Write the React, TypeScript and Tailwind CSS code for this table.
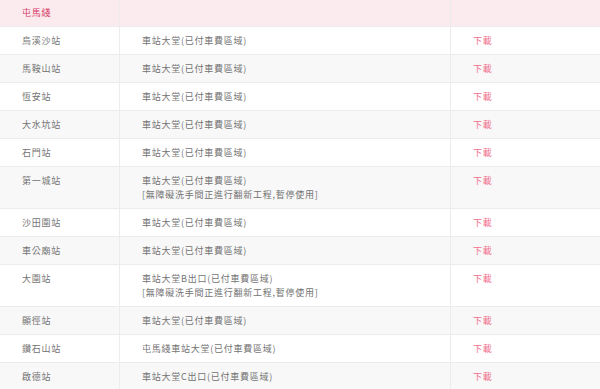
type Row = { name: string; place: string; note?: string };

const rows: Row[] = [
  { name: "烏溪沙站", place: "車站大堂(已付車費區域)" },
  { name: "馬鞍山站", place: "車站大堂(已付車費區域)" },
  { name: "恆安站", place: "車站大堂(已付車費區域)" },
  { name: "大水坑站", place: "車站大堂(已付車費區域)" },
  { name: "石門站", place: "車站大堂(已付車費區域)" },
  {
    name: "第一城站",
    place: "車站大堂(已付車費區域)",
    note: "[無障礙洗手間正進行翻新工程,暫停使用]",
  },
  { name: "沙田圍站", place: "車站大堂(已付車費區域)" },
  { name: "車公廟站", place: "車站大堂(已付車費區域)" },
  {
    name: "大圍站",
    place: "車站大堂B出口(已付車費區域)",
    note: "[無障礙洗手間正進行翻新工程,暫停使用]",
  },
  { name: "顯徑站", place: "車站大堂(已付車費區域)" },
  { name: "鑽石山站", place: "屯馬綫車站大堂(已付車費區域)" },
  { name: "啟德站", place: "車站大堂C出口(已付車費區域)" },
];

const cell = "pt-[7px] pb-[6px] pl-[22px] leading-[14px]";
const headCell = "pt-[6px] pb-[6px] pl-[22px] leading-[14px]";

export default function App() {
  return (
    <div className="w-[600px] h-[389px] overflow-hidden bg-white text-[9px] tracking-[0.75px] text-[#737373] font-['Noto_Sans_CJK_TC','Noto_Sans_CJK_SC',sans-serif]">
      <div className="grid grid-cols-[120px_331px_149px] bg-[#fbebef] border-b border-[#ececec]">
        <div className={`${headCell} border-r border-[#ececec] text-[#d63a64]`}>屯馬綫</div>
        <div className={`${headCell} border-r border-[#ececec]`}>&nbsp;</div>
        <div className={headCell}>&nbsp;</div>
      </div>
      {rows.map((r, i) => (
        <div
          key={r.name}
          className={`grid grid-cols-[120px_331px_149px] border-b border-[#ececec] ${
            i % 2 === 0 ? "bg-white" : "bg-[#f8f8f8]"
          }`}
        >
          <div className={`${cell} border-r border-[#ececec]`}>{r.name}</div>
          <div className={`${cell} border-r border-[#ececec]`}>
            <div>{r.place}</div>
            {r.note && <div>{r.note}</div>}
          </div>
          <div className={`${cell} text-[#f1708c]`}>下載</div>
        </div>
      ))}
    </div>
  );
}
